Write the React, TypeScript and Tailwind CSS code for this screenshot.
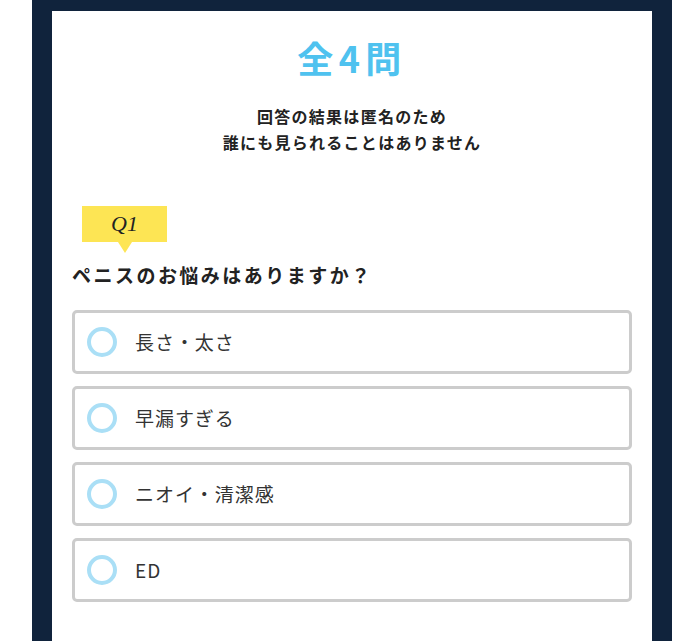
const options = ['長さ・太さ', '早漏すぎる', 'ニオイ・清潔感', 'ED'];

export default function App() {
  return (
    <div className="min-h-screen bg-white" style={{ fontFamily: '"Noto Sans CJK JP", "Noto Sans", sans-serif' }}>
      <div className="ml-[32px] w-[640px] bg-[#10233c] px-[20px] pt-[11px]">
        <div className="bg-white px-[20px] pt-[19px] pb-[60px] min-h-[660px]">
          {/* Header */}
          <h1 className="text-center text-[36px] leading-[54px] font-bold tracking-[0.15em] text-[#4fc2ef]">
            全4問
          </h1>
          <p className="mt-[19px] text-center text-[16px] leading-[26px] font-bold tracking-[0.08em] text-[#222]">
            回答の結果は匿名のため
            <br />
            誰にも見られることはありません
          </p>

          {/* Question */}
          <div className="mt-[51px] ml-[10px] relative w-[85px] h-[36px] bg-[#fde554] flex items-center justify-center">
            <span
              className="text-[22px] italic text-[#222] leading-none"
              style={{ fontFamily: '"Liberation Serif", serif' }}
            >
              Q1
            </span>
            <span className="absolute left-1/2 -translate-x-1/2 top-full w-0 h-0 border-l-[7px] border-r-[7px] border-t-[11px] border-l-transparent border-r-transparent border-t-[#fde554]" />
          </div>
          <h2 className="mt-[19px] text-[19px] leading-[28px] font-bold tracking-[0.13em] text-[#222]">
            ペニスのお悩みはありますか？
          </h2>

          <div className="mt-[21px] flex flex-col gap-[12px]">
            {options.map((o) => (
              <label
                key={o}
                className="h-[64px] flex items-center border-[3px] border-[#cccccc] rounded-[5px] pl-[12px] cursor-pointer"
              >
                <span className="w-[30px] h-[30px] rounded-full border-[4px] border-[#aadff6] shrink-0" />
                <span className="ml-[18px] text-[19px] tracking-[0.05em] text-[#333]">{o}</span>
              </label>
            ))}
          </div>
        </div>
      </div>
    </div>
  );
}
